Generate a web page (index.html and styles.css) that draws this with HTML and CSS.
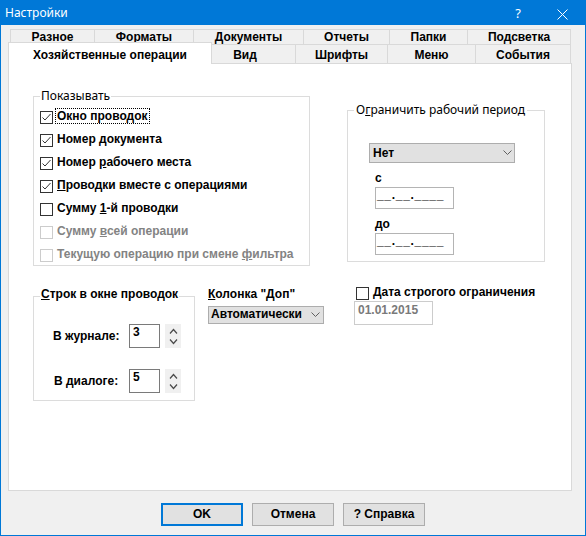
FILE: index.html
```html
<!DOCTYPE html>
<html lang="ru">
<head>
<meta charset="utf-8">
<title>Настройки</title>
<link rel="stylesheet" href="styles.css">
</head>
<body>
<div class="window">
  <div class="titlebar">
    <span class="title">Настройки</span>
    <span class="help">?</span>
    <svg class="close" width="11" height="11" viewBox="0 0 11 11"><path d="M0.5 0.5 L10.5 10.5 M10.5 0.5 L0.5 10.5" stroke="#fff" stroke-width="1" fill="none"/></svg>
  </div>
  <div class="client">
    <div class="tabs">
      <div class="tabrow row1">
        <div class="tab first w85">Разное</div>
        <div class="tab w99">Форматы</div>
        <div class="tab w110">Документы</div>
        <div class="tab w86">Отчеты</div>
        <div class="tab w78">Папки</div>
        <div class="tab w103">Подсветка</div>
      </div>
      <div class="tabrow row2">
        <div class="tab sel">Хозяйственные операции</div>
        <div class="tab w84 vid">Вид</div>
        <div class="tab w92">Шрифты</div>
        <div class="tab w88">Меню</div>
        <div class="tab w95">События</div>
      </div>
    </div>
    <div class="panel">
      <div class="top-row">
        <div class="group g-show">
          <div class="legend">Показывать</div>
          <div class="check-list">
            <div class="check-row"><span class="box"><svg width="11" height="11" viewBox="0 0 11 11"><path d="M1.5 5.5 L4 8 L9.5 2" stroke="#333" fill="none"/></svg></span><span class="label focus">Окно проводок</span></div>
            <div class="check-row"><span class="box"><svg width="11" height="11" viewBox="0 0 11 11"><path d="M1.5 5.5 L4 8 L9.5 2" stroke="#333" fill="none"/></svg></span><span class="label">Номер <u>д</u>окумента</span></div>
            <div class="check-row"><span class="box"><svg width="11" height="11" viewBox="0 0 11 11"><path d="M1.5 5.5 L4 8 L9.5 2" stroke="#333" fill="none"/></svg></span><span class="label">Номер <u>р</u>абочего места</span></div>
            <div class="check-row"><span class="box"><svg width="11" height="11" viewBox="0 0 11 11"><path d="M1.5 5.5 L4 8 L9.5 2" stroke="#333" fill="none"/></svg></span><span class="label"><u>П</u>роводки вместе с операциями</span></div>
            <div class="check-row"><span class="box"></span><span class="label">Сумму <u>1</u>-й проводки</span></div>
            <div class="check-row"><span class="box dis"></span><span class="label dis">Сумму <u>в</u>сей операции</span></div>
            <div class="check-row"><span class="box dis"></span><span class="label dis">Текущую операцию при смене <u>ф</u>ильтра</span></div>
          </div>
        </div>
        <div class="group g-period">
          <div class="legend legend-wide">О<u>г</u>раничить рабочий период</div>
          <div class="combo combo-none"><span>Нет</span><svg class="chev" width="9" height="5" viewBox="0 0 9 5"><path d="M0.5 0.5 L4.5 4.5 L8.5 0.5" stroke="#606060" fill="none"/></svg></div>
          <div class="small-lbl">с</div>
          <div class="mask-edit">__.__.____</div>
          <div class="small-lbl">до</div>
          <div class="mask-edit">__.__.____</div>
        </div>
      </div>
      <div class="bottom-row">
        <div class="group g-rows">
          <div class="legend legend-bold"><u>С</u>трок в окне проводок</div>
          <div class="spin-row first-spin">
            <div class="spin-lbl lbl1">В журнале:</div>
            <div class="spin-edit">3</div>
            <div class="spinner"><svg width="16" height="24" viewBox="0 0 16 24"><path d="M5 9.5 L8.5 5.5 L12 9.5 M5 15.5 L8.5 19.5 L12 15.5" stroke="#4a4a4a" stroke-width="1.2" fill="none"/></svg></div>
          </div>
          <div class="spin-row second-spin">
            <div class="spin-lbl lbl2">В диалоге:</div>
            <div class="spin-edit">5</div>
            <div class="spinner"><svg width="16" height="24" viewBox="0 0 16 24"><path d="M5 9.5 L8.5 5.5 L12 9.5 M5 15.5 L8.5 19.5 L12 15.5" stroke="#4a4a4a" stroke-width="1.2" fill="none"/></svg></div>
          </div>
        </div>
        <div class="kolonka">
          <div class="k-lbl"><u>К</u>олонка "Доп"</div>
          <div class="combo combo-auto"><span>Автоматически</span><svg class="chev" width="9" height="5" viewBox="0 0 9 5"><path d="M0.5 0.5 L4.5 4.5 L8.5 0.5" stroke="#606060" fill="none"/></svg></div>
        </div>
        <div class="date-block">
          <div class="date-check"><span class="box"></span><span class="label plain">Дата строгого ограничения</span></div>
          <div class="date-edit">01.01.2015</div>
        </div>
      </div>
    </div>
    <div class="buttons">
      <div class="btn default">OK</div>
      <div class="btn">Отмена</div>
      <div class="btn">? Справка</div>
    </div>
  </div>
</div>
</body>
</html>
```
FILE: styles.css
```css
body {
  margin: 0;
  font-family: "Liberation Sans", Arial, sans-serif;
  font-size: 12px;
  font-weight: bold;
  color: #000;
}

.window {
  width: 586px;
  height: 536px;
  box-sizing: border-box;
  border: 1px solid #0078d7;
  border-top: 0;
  background: #f0f0f0;
  overflow: hidden;
}

.titlebar {
  height: 25px;
  background: #0078d7;
  color: #fff;
  display: flex;
  align-items: flex-start;
  font-family: "Noto Sans", "Open Sans", sans-serif;
  font-weight: normal;
  font-size: 12px;
}

.title {
  flex: 1;
  padding: 3px 0 0 4px;
  line-height: 20px;
}

.help {
  line-height: 20px;
  padding-top: 3px;
  margin-right: 36px;
  font-size: 13px;
}

.close {
  margin: 9px 17px 0 0;
}

.client {
  padding: 4px 7px 0 7px;
}

.tabrow {
  display: flex;
}

.row1 {
  margin-left: 2px;
  height: 15px;
}

.row2 {
  height: 19px;
  align-items: flex-start;
}

.tab {
  box-sizing: border-box;
  border-top: 1px solid #d9d9d9;
  border-right: 1px solid #d9d9d9;
  background: #f0f0f0;
  text-align: center;
  white-space: nowrap;
  line-height: 15px;
}

.row1 .tab {
  height: 15px;
  padding-top: 0;
}

.row2 .tab {
  height: 19px;
  padding-top: 3px;
}

.tab.first {
  border-left: 1px solid #d9d9d9;
}

.row2 .tab.sel {
  width: 204px;
  height: 22px;
  margin-top: -2px;
  padding-top: 5px;
  border-left: 1px solid #d9d9d9;
  background: #fff;
  position: relative;
  z-index: 1;
}

.tab.vid {
  padding-right: 17px;
}

.w78 { width: 78px; }
.w84 { width: 84px; }
.w85 { width: 85px; }
.w86 { width: 86px; }
.w88 { width: 88px; }
.w92 { width: 92px; }
.w95 { width: 95px; }
.w99 { width: 99px; }
.w103 { width: 103px; }
.w110 { width: 110px; }

.panel {
  width: 564px;
  height: 428px;
  box-sizing: border-box;
  border: 1px solid #d9d9d9;
  background: #fff;
}

.top-row {
  display: flex;
  align-items: flex-start;
  padding: 32px 0 0 24px;
}

.group {
  box-sizing: border-box;
  border: 1px solid #dcdcdc;
}

.legend {
  width: max-content;
  background: #fff;
  margin: -9px 0 0 6px;
  padding: 0 1px;
  font-family: "Noto Sans", "Open Sans", sans-serif;
  font-weight: normal;
  line-height: 16px;
}

.legend-wide {
  padding: 0 2px;
}

.legend-bold {
  font-family: "Liberation Sans", Arial, sans-serif;
  font-weight: bold;
  line-height: 15px;
  margin-top: -10px;
}

.g-show {
  width: 277px;
  height: 170px;
}

.check-list {
  padding-top: 2px;
}

.check-row {
  display: flex;
  align-items: center;
  height: 23px;
  padding-left: 6px;
}

.box {
  width: 13px;
  height: 13px;
  box-sizing: border-box;
  border: 1px solid #333;
  background: #fff;
  flex: none;
  display: flex;
  align-items: center;
  justify-content: center;
}

.box.dis {
  border-color: #cccccc;
}

.label {
  margin-left: 2px;
  margin-bottom: 3px;
  border: 1px solid transparent;
  padding: 0 1px;
  line-height: 14px;
  white-space: nowrap;
}

.label.focus {
  border: 1px dotted #000;
}

.label.dis {
  color: #838383;
}

.g-period {
  width: 198px;
  height: 152px;
  margin: 14px 0 0 37px;
}

.combo {
  box-sizing: border-box;
  border: 1px solid #adadad;
  background: #e1e1e1;
  display: flex;
  align-items: center;
  line-height: 15px;
  white-space: nowrap;
}

.combo .chev {
  margin-left: auto;
}

.combo-none {
  width: 146px;
  height: 20px;
  margin: 25px 0 0 21px;
  padding: 1px 0 0 3px;
}

.combo-none .chev {
  margin-right: 2px;
  margin-top: -2px;
}

.small-lbl {
  margin: 8px 0 0 27px;
  line-height: 15px;
}

.mask-edit {
  width: 79px;
  height: 22px;
  box-sizing: border-box;
  margin: 1px 0 0 27px;
  border: 1px solid #b4b4b4;
  background: #fff;
  padding: 0 1px;
  line-height: 15px;
  letter-spacing: 0.7px;
  white-space: nowrap;
  overflow: hidden;
}

.bottom-row {
  display: flex;
  align-items: flex-start;
  margin-top: 18px;
  padding-left: 24px;
}

.g-rows {
  width: 162px;
  height: 105px;
  margin-top: 12px;
}

.spin-row {
  display: flex;
  align-items: flex-start;
  height: 24px;
}

.first-spin {
  margin-top: 22px;
}

.second-spin {
  margin-top: 21px;
}

.spin-lbl {
  margin-top: 5px;
  line-height: 15px;
  white-space: nowrap;
}

.lbl1 {
  margin-left: 19px;
  width: 76px;
}

.lbl2 {
  margin-left: 20px;
  width: 75px;
}

.spin-edit {
  width: 31px;
  height: 24px;
  box-sizing: border-box;
  border: 1px solid #7a7a7a;
  padding-left: 3px;
  line-height: 15px;
}

.spinner {
  width: 16px;
  height: 24px;
  margin-left: 5px;
  background: #f0f0f0;
}

.spinner svg {
  display: block;
}

.kolonka {
  width: 116px;
  margin: 3px 0 0 13px;
}

.k-lbl {
  line-height: 15px;
  white-space: nowrap;
}

.combo-auto {
  width: 116px;
  height: 18px;
  margin-top: 4px;
  padding: 0 0 1px 2px;
}

.combo-auto .chev {
  margin-right: 3px;
}

.date-block {
  margin: 2px 0 0 30px;
}

.date-check {
  display: flex;
  align-items: center;
  height: 15px;
  margin-left: 2px;
}

.label.plain {
  margin-left: 2px;
}

.date-edit {
  width: 79px;
  height: 24px;
  box-sizing: border-box;
  border: 1px solid #cccccc;
  background: #fff;
  padding: 1px 0 0 3px;
  line-height: 15px;
  color: #7a7a7a;
}

.buttons {
  display: flex;
  justify-content: center;
  gap: 9px;
  margin-top: 12px;
}

.btn {
  width: 82px;
  height: 23px;
  box-sizing: border-box;
  border: 1px solid #adadad;
  background: #e1e1e1;
  display: flex;
  align-items: center;
  justify-content: center;
  line-height: 15px;
}

.btn.default {
  border: 2px solid #0078d7;
}
```
